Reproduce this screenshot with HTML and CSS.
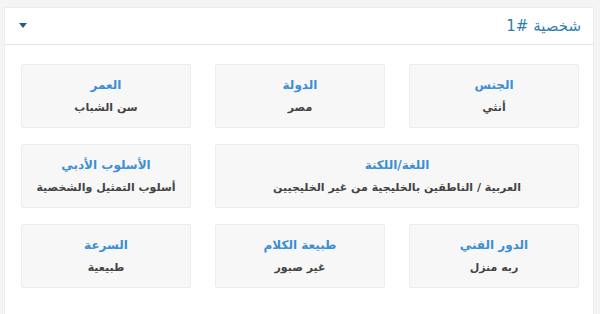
FILE: index.html
```html
<!DOCTYPE html>
<html lang="ar" dir="rtl">
<head>
    <meta charset="UTF-8">
    <meta name="viewport" content="width=device-width, initial-scale=1.0">
    <title>شخصية #1</title>
    <link rel="stylesheet" href="styles.css">
</head>
<body>
    <!-- بطاقة الشخصية -->
    <div class="panel">
        <div class="panel-head">
            <span class="panel-title">شخصية #1</span>
            <span class="caret"></span>
        </div>
        <div class="panel-body">
            <div class="field">
                <div class="field-label">الجنس</div>
                <div class="field-value">أنثي</div>
            </div>
            <div class="field">
                <div class="field-label">الدولة</div>
                <div class="field-value">مصر</div>
            </div>
            <div class="field">
                <div class="field-label">العمر</div>
                <div class="field-value">سن الشباب</div>
            </div>
            <div class="field wide">
                <div class="field-label">اللغة/اللكنة</div>
                <div class="field-value">العربية / الناطقين بالخليجية من غير الخليجيين</div>
            </div>
            <div class="field">
                <div class="field-label">الأسلوب الأدبي</div>
                <div class="field-value">أسلوب التمثيل والشخصية</div>
            </div>
            <div class="field">
                <div class="field-label">الدور الفني</div>
                <div class="field-value">ربه منزل</div>
            </div>
            <div class="field">
                <div class="field-label">طبيعة الكلام</div>
                <div class="field-value">غير صبور</div>
            </div>
            <div class="field">
                <div class="field-label">السرعة</div>
                <div class="field-value">طبيعية</div>
            </div>
        </div>
    </div>
</body>
</html>
```

FILE: styles.css
```css
/* Main Styles */
body {
    font-family: "DejaVu Sans", "Noto Sans", sans-serif;
    margin: 0;
    padding: 7px 6px 0 4px;
    background-color: #f4f4f4;
}
.panel {
    background-color: white;
    border: 1px solid #ececec;
    border-bottom: none;
}

/* Header */
.panel-head {
    display: flex;
    justify-content: space-between;
    align-items: center;
    height: 36px;
    padding: 0 12px 0 14px;
    border-bottom: 1px solid #e6e6e6;
}
.panel-title {
    font-size: 15px;
    color: #2f7eaa;
}
.caret {
    width: 0;
    height: 0;
    border-left: 4px solid transparent;
    border-right: 4px solid transparent;
    border-top: 5px solid #1f5f82;
    margin-top: -2px;
}

/* Fields grid */
.panel-body {
    display: grid;
    grid-template-columns: repeat(3, 1fr);
    column-gap: 24px;
    row-gap: 16px;
    padding: 19px 14px 26px 16px;
}
.field {
    height: 62px;
    background-color: #f7f7f7;
    border: 1px solid #ececec;
    border-radius: 2px;
    text-align: center;
    display: flex;
    flex-direction: column;
    justify-content: center;
    gap: 9px;
}
.field.wide {
    grid-column: span 2;
}
.field-label {
    font-size: 12px;
    font-weight: bold;
    color: #3a8fd6;
}
.field-value {
    font-size: 11px;
    font-weight: bold;
    color: #444;
}
```
